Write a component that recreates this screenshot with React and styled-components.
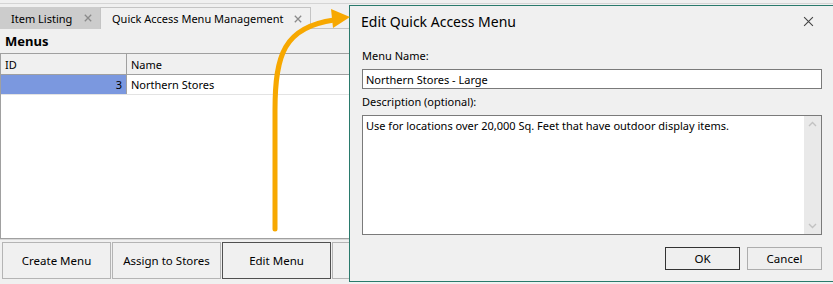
import React from 'react'
import styled, { createGlobalStyle } from 'styled-components'

const GlobalStyle = createGlobalStyle`
  body {
    margin: 0;
    background: #f0f0f0;
    font-family: "Noto Sans", "Open Sans", sans-serif;
    font-size: 11px;
    color: #000;
  }
`

const Screen = styled.div`
  position: relative;
  width: 833px;
  height: 284px;
  overflow: hidden;
  background: #f0f0f0;
`

const MainWindow = styled.div`
  display: flex;
  flex-direction: column;
  margin-top: 3px;
  border-top: 1px solid #d4d4d4;
  height: 280px;
`

const TabStrip = styled.div`
  display: flex;
  margin-top: 3px;
  height: 22px;
`

const Tab = styled.div`
  display: flex;
  align-items: center;
  justify-content: space-between;
  box-sizing: border-box;
  width: ${p => p.$width}px;
  padding: 0 8px 0 11px;
  background: ${p => p.$active ? '#f0f0f0' : '#cccccc'};
  border: ${p => p.$active ? '1px solid #c4c4c4' : 'none'};
  border-bottom: none;
  white-space: nowrap;
`

const TabFill = styled.div`
  flex: 1;
  border-bottom: 1px solid #c4c4c4;
`

const Heading = styled.div`
  height: 24px;
  padding-left: 5px;
  font-weight: 700;
  font-size: 13px;
  line-height: 24px;
`

const Grid = styled.div`
  display: flex;
  flex-direction: column;
  height: 184px;
  border: 1px solid #a0a0a0;
  border-right: none;
  background: #fff;
`

const GridRow = styled.div`
  display: grid;
  grid-template-columns: 126px 1fr;
  height: ${p => p.$header ? 20 : 19}px;
  background: ${p => p.$header ? '#f0f0f0' : '#fff'};
  border-bottom: 1px solid ${p => p.$header ? '#a0a0a0' : '#e3e3e3'};
`

const Cell = styled.div`
  display: flex;
  align-items: center;
  justify-content: ${p => p.$right ? 'flex-end' : 'flex-start'};
  padding: 0 4px;
  background: ${p => p.$selected ? '#7b98df' : 'transparent'};
  border-right: 1px solid ${p => p.$divider ? '#a0a0a0' : 'transparent'};
`

const ButtonBar = styled.div`
  display: flex;
  gap: 1px;
  padding: 2px 2px 0;
  border-top: 1px solid #d8d8d8;
`

const ActionButton = styled.button`
  width: ${p => p.$width || 109}px;
  height: 37px;
  flex: none;
  font: inherit;
  font-size: 11.5px;
  background: #f0f0f0;
  border: 1px solid ${p => p.$focused ? '#505050' : '#b4b4b4'};
  color: #000;
  padding: 0;
`

const Dialog = styled.div`
  position: absolute;
  left: 349px;
  top: 5px;
  width: 486px;
  height: 277px;
  box-sizing: border-box;
  border: 1px solid #2a7a6c;
  background: #f0f0f0;
  display: flex;
  flex-direction: column;
`

const TitleBar = styled.div`
  display: flex;
  align-items: center;
  justify-content: space-between;
  height: 30px;
  padding: 0 20px 0 11px;
  font-size: 14px;
`

const DialogBody = styled.div`
  display: flex;
  flex-direction: column;
  padding: 0 12px;
`

const Label = styled.div`
  margin-top: ${p => p.$top}px;
  height: 15px;
  line-height: 15px;
`

const TextBox = styled.div`
  box-sizing: border-box;
  margin-top: 6px;
  height: ${p => p.$height}px;
  background: #fff;
  border: 1px solid #7a7a7a;
  display: flex;
  align-items: ${p => p.$multi ? 'stretch' : 'center'};
  padding-left: 3px;
`

const TextContent = styled.div`
  flex: 1;
  padding-top: ${p => p.$multi ? 2 : 0}px;
`

const ScrollTrack = styled.div`
  width: 17px;
  background: #e9e9e9;
  display: flex;
  flex-direction: column;
  justify-content: space-between;
  align-items: center;
  padding: 5px 0;
`

const DialogButtons = styled.div`
  display: flex;
  justify-content: flex-end;
  gap: 7px;
  margin-top: 12px;
`

const DialogButton = styled.button`
  width: 75px;
  height: 23px;
  font: inherit;
  font-size: 11.5px;
  color: #000;
  background: #efefef;
  border: 1px solid ${p => p.$default ? '#333333' : '#adadad'};
  padding: 0;
`

const Overlay = styled.svg`
  position: absolute;
  left: 0;
  top: 0;
  pointer-events: none;
`

const CloseGlyph = ({ size = 8, color = '#8a8a8a', width = 1.6 }) => (
  <svg width={size} height={size} viewBox="0 0 10 10">
    <path d="M1 1 L9 9 M9 1 L1 9" stroke={color} strokeWidth={width} />
  </svg>
)

const Chevron = ({ up }) => (
  <svg width="9" height="6" viewBox="0 0 9 6">
    <path d={up ? 'M1 5 L4.5 1.5 L8 5' : 'M1 1 L4.5 4.5 L8 1'} stroke="#c2c2c2" strokeWidth="1.4" fill="none" />
  </svg>
)

export default function App() {
  return (
    <Screen>
      <GlobalStyle />
      <MainWindow>
        <TabStrip>
          <Tab $width={100}>
            Item Listing
            <CloseGlyph />
          </Tab>
          <Tab $width={211} $active>
            Quick Access Menu Management
            <CloseGlyph />
          </Tab>
          <TabFill />
        </TabStrip>
        <Heading>Menus</Heading>
        <Grid>
          <GridRow $header>
            <Cell $divider>ID</Cell>
            <Cell>Name</Cell>
          </GridRow>
          <GridRow>
            <Cell $right $selected $divider>3</Cell>
            <Cell>Northern Stores</Cell>
          </GridRow>
        </Grid>
        <ButtonBar>
          <ActionButton>Create Menu</ActionButton>
          <ActionButton>Assign to Stores</ActionButton>
          <ActionButton $focused>Edit Menu</ActionButton>
          <ActionButton>More</ActionButton>
        </ButtonBar>
      </MainWindow>

      <Dialog>
        <TitleBar>
          Edit Quick Access Menu
          <CloseGlyph size={11} color="#444" width={1} />
        </TitleBar>
        <DialogBody>
          <Label $top={12}>Menu Name:</Label>
          <TextBox $height={20}>
            <TextContent>Northern Stores - Large</TextContent>
          </TextBox>
          <Label $top={5}>Description (optional):</Label>
          <TextBox $height={120} $multi>
            <TextContent $multi>Use for locations over 20,000 Sq. Feet that have outdoor display items.</TextContent>
            <ScrollTrack>
              <Chevron up />
              <Chevron />
            </ScrollTrack>
          </TextBox>
          <DialogButtons>
            <DialogButton $default>OK</DialogButton>
            <DialogButton>Cancel</DialogButton>
          </DialogButtons>
        </DialogBody>
      </Dialog>

      <Overlay width="833" height="284">
        <path d="M275 229 L275 110 C275 55 284 27 334 20" stroke="#f7a800" strokeWidth="5" fill="none" strokeLinecap="round" />
        <polygon points="331,9 350,17 333,28" fill="#f7a800" />
      </Overlay>
    </Screen>
  )
}
